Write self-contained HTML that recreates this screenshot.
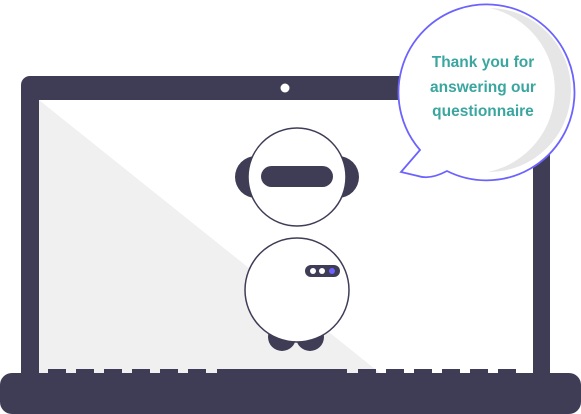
<!DOCTYPE html>
<html><head><style>
html,body{margin:0;padding:0;background:#fff;width:581px;height:414px;overflow:hidden}
svg{display:block}
</style></head><body>
<svg width="581" height="414" viewBox="0 0 581 414" xmlns="http://www.w3.org/2000/svg">
<rect x="21" y="76" width="529" height="310" rx="9" fill="#3f3d56"/>
<rect x="39" y="100" width="494" height="280" fill="#fff"/>
<polygon points="39,100 380,373 39,373" fill="#f0f0f0"/>
<circle cx="285" cy="88" r="4.5" fill="#fff"/>
<!-- keys -->
<g fill="#3f3d56">
<rect x="48" y="369" width="18" height="8"/><rect x="76" y="369" width="18" height="8"/><rect x="104" y="369" width="18" height="8"/><rect x="132" y="369" width="18" height="8"/><rect x="160" y="369" width="18" height="8"/><rect x="188" y="369" width="18" height="8"/>
<rect x="217" y="369" width="130" height="8"/>
<rect x="358" y="369" width="18" height="8"/><rect x="386" y="369" width="18" height="8"/><rect x="414" y="369" width="18" height="8"/><rect x="442" y="369" width="18" height="8"/><rect x="470" y="369" width="18" height="8"/><rect x="498" y="369" width="18" height="8"/>
</g>
<rect x="0" y="373" width="581" height="41" rx="12" fill="#3f3d56"/>
<!-- robot -->
<circle cx="256" cy="177" r="21" fill="#3f3d56"/>
<circle cx="338" cy="177" r="21" fill="#3f3d56"/>
<circle cx="297" cy="177" r="49" fill="#fff" stroke="#3f3d56" stroke-width="1.5"/>
<rect x="261" y="166" width="72" height="21" rx="10.5" fill="#3f3d56"/>
<circle cx="282" cy="337" r="14" fill="#3f3d56"/>
<circle cx="310" cy="337" r="14" fill="#3f3d56"/>
<circle cx="297" cy="290" r="52" fill="#fff" stroke="#3f3d56" stroke-width="1.5"/>
<rect x="305" y="265" width="35" height="12" rx="6" fill="#3f3d56"/>
<circle cx="313" cy="271" r="3" fill="#fff"/>
<circle cx="322" cy="271" r="3" fill="#fff"/>
<circle cx="332" cy="271" r="3" fill="#6c63ff"/>
<!-- bubble -->
<path d="M420,150 A88,88 0 1 1 447,171 Q430,180 418,176 L401,172 Z" fill="#fff" stroke="#6c63ff" stroke-width="1.8"/>
<path d="M490,8 A84,84 0 0 1 488,172 A80,80 0 0 0 490,8 Z" fill="#e6e6e6"/>
<g font-family="'Liberation Sans',sans-serif" font-weight="bold" font-size="15.5" fill="#3aa69f" text-anchor="middle">
<text x="483" y="67">Thank you for</text>
<text x="483" y="92">answering our</text>
<text x="483" y="116">questionnaire</text>
</g>
</svg>
</body></html>
